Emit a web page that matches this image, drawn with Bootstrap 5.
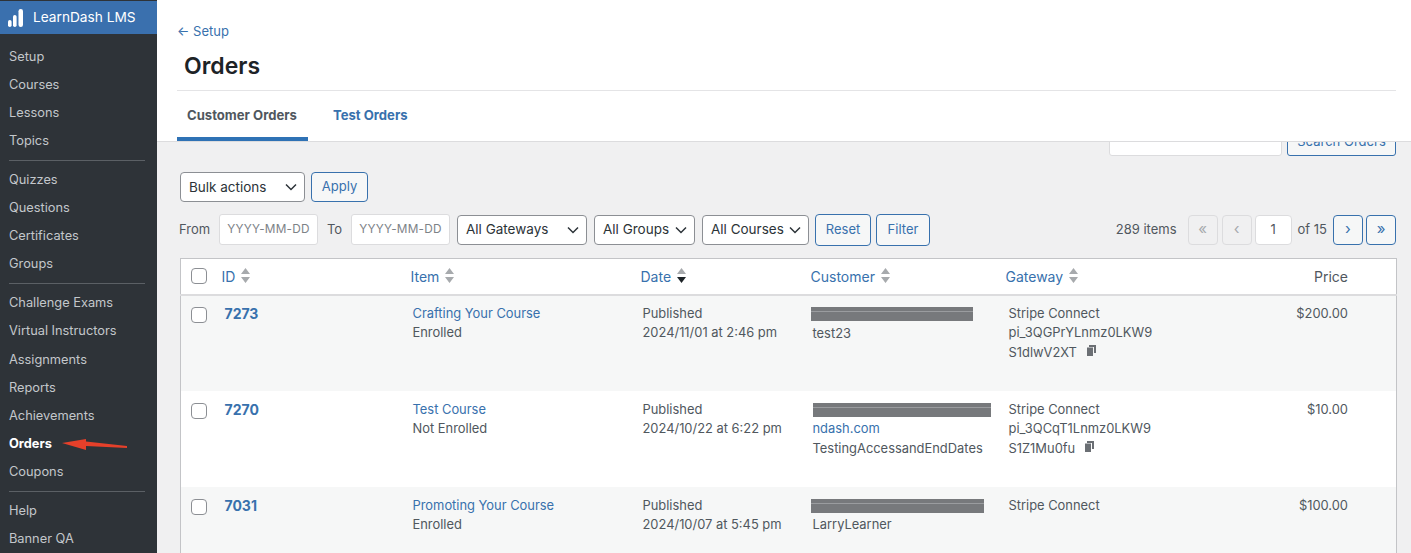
<!DOCTYPE html>
<html lang="en">
<head>
    <meta charset="UTF-8">
    <meta name="viewport" content="width=device-width, initial-scale=1.0">
    <title>Orders</title>
    <link href="https://cdn.jsdelivr.net/npm/bootstrap@5.3.0/dist/css/bootstrap.min.css" rel="stylesheet">
    <style>
        html, body { height: 553px; overflow: hidden; }
        body { font-family: Inter, "Noto Sans", sans-serif; font-size: 13px; color: #50575e; background: #f0f0f1; }
        a { color: #3871ad; text-decoration: none; }

        .ld-shell { height: 553px; }
        .ld-side { width: 157px; flex: none; background: #2e3338; color: #c3c7cb; position: relative; overflow: hidden; }
        .ld-brand { height: 33px; background: #3a70ae; color: #fff; font-size: 13.7px; padding-left: 8px; gap: 10px; margin-top: 1px; }
        .ld-menu { padding-top: 8.6px; }
        .ld-menu a { display: block; height: 28.1px; line-height: 28.1px; padding-left: 9px; color: #c3c7cb; font-size: 12.8px; }
        .ld-menu a.is-on { color: #fff; font-weight: 700; }
        .ld-menu hr { margin: 5px 12px 5px 9px; border: 0; border-top: 1px solid #5b6065; opacity: 1; }
        .ld-arrow { position: absolute; left: 55px; top: 432px; }

        .ld-main { flex: 1; min-width: 0; }
        .ld-head { height: 142px; background: #fff; padding: 0 15px 0 20px; border-bottom: 1px solid #dcdcde; position: relative; z-index: 2; }
        .ld-back { padding-top: 24px; height: 42px; line-height: 15px; font-size: 13px; }
        .ld-title { font-size: 23px; font-weight: 600; color: #1d2327; margin: 0; padding: 7px 0 0 7px; height: 49px; line-height: 34px; border-bottom: 1px solid #e4e4e6; }
        .ld-tabs a { display: block; height: 50px; line-height: 49px; font-weight: 700; font-size: 13.1px; padding: 0 10px; margin-right: 15px; }
        .ld-tabs a.is-on { color: #50575e; border-bottom: 4px solid #2f72b5; width: 131px; }

        .ld-body { padding: 0 15px 0 23px; }
        .ld-search { height: 14px; gap: 5px; overflow: hidden; }
        .ld-search span { display: block; height: 40px; margin-top: -26px; }
        .ld-search .ld-sinput { width: 173px; background: #fff; border: 1px solid #dcdcde; border-radius: 3px; }
        .ld-search .ld-sbtn { width: 109px; background: #f6f7f7; border: 1px solid #3871ad; border-radius: 3px; color: #3871ad; text-align: center; line-height: 48px; overflow: hidden; }

        .ld-select, .ld-btn, .ld-date, .ld-page { height: 30px; border-radius: 4px; font-size: 13px; }
        .ld-select { display: flex; align-items: center; justify-content: space-between; background: #fff; border: 1px solid #8c8f94; color: #2c3338; padding: 0 7px 0 8px; font-size: 13.5px; }
        .ld-btn { display: flex; align-items: center; justify-content: center; background: #f6f7f7; border: 1px solid #3871ad; color: #3871ad; padding: 0; }
        .ld-date { display: flex; align-items: center; justify-content: center; width: 99px; height: 31px; background: #fff; border: 1px solid #dcdcde; border-radius: 3px; color: #7d8287; font-size: 11.8px; letter-spacing: .2px; }
        .ld-page { display: flex; align-items: center; justify-content: center; width: 30px; background: #f6f7f7; border: 1px solid #3871ad; color: #3871ad; font-size: 15px; }
        .ld-page.is-off { background: #f0f0f1; border-color: #dcdcde; color: #a7aaad; }
        .ld-page.is-num { width: 37px; background: #fff; border-color: #dcdcde; color: #50575e; font-size: 13px; }
        .ld-row1 { margin-top: 16px; gap: 6px; }
        .ld-row2 { margin-top: 12px; height: 31px; }
        .ld-row2 .ld-btn { height: 32px; }

        .ld-table { width: 1216px; margin-top: 13px; table-layout: fixed; border-collapse: collapse; border: 1px solid #c3c4c7; background: #fff; }
        .ld-table th { height: 36px; font-weight: 400; font-size: 14px; border-bottom: 2px solid #dcdcde; vertical-align: middle; padding: 0; }
        .ld-table td { height: 96px; vertical-align: top; padding: 8px 0 0; line-height: 19.6px; font-size: 12.9px; color: #50575e; }
        .ld-table tbody tr:not(:first-child) td { padding-top: 9px; }
        .ld-table tbody tr:not(:first-child) td.ld-wide { padding-left: 2px; }
        .ld-table tbody tr:not(:first-child) td.ld-gate { padding-left: 3px; }
        .ld-table tr.is-alt td { background: #f6f7f7; }
        .ld-table td.ld-id { font-size: 14px; font-weight: 700; color: #3871ad; padding-left: 3px; }
        .ld-check { display: block; width: 16px; height: 16px; margin-left: 10px; border: 1px solid #8c8f94; border-radius: 4px; background: #fff; }
        .ld-sort { display: inline-block; vertical-align: -1px; margin-left: 6px; }
        .ld-pad { padding-left: 2px; }
        .ld-table td.ld-wide { padding-left: 2px; }
        .ld-table td.ld-gate { padding-left: 3px; }
        .ld-mask { display: block; height: 14px; margin-top: 3px; margin-bottom: 3.6px; background: linear-gradient(#77797c 4px, #9a9c9f 4px, #9a9c9f 5px, #77797c 5px); }
        .ld-table tbody tr:not(:first-child) .ld-mask { margin-bottom: 2.6px; }
        .ld-copy { margin-left: 9px; vertical-align: 1px; }
    </style>
</head>
<body>
<div class="d-flex ld-shell">
    <div class="ld-side">
        <div class="d-flex align-items-center ld-brand">
            <svg width="15" height="18" viewBox="0 0 15 18"><rect x="0" y="11" width="3.6" height="7" rx="1.8" fill="#fff"/><rect x="5" y="6" width="3.6" height="12" rx="1.8" fill="#fff"/><rect x="10.5" y="0" width="4.5" height="18" rx="2.2" fill="#fff"/></svg>
            <span>LearnDash LMS</span>
        </div>
        <div class="ld-menu">
            <a href="#">Setup</a>
            <a href="#">Courses</a>
            <a href="#">Lessons</a>
            <a href="#">Topics</a>
            <hr>
            <a href="#">Quizzes</a>
            <a href="#">Questions</a>
            <a href="#">Certificates</a>
            <a href="#">Groups</a>
            <hr>
            <a href="#">Challenge Exams</a>
            <a href="#">Virtual Instructors</a>
            <a href="#">Assignments</a>
            <a href="#">Reports</a>
            <a href="#">Achievements</a>
            <a href="#" class="is-on">Orders</a>
            <a href="#">Coupons</a>
            <hr>
            <a href="#">Help</a>
            <a href="#">Banner QA</a>
        </div>
        <svg class="ld-arrow" width="76" height="20" viewBox="0 0 76 20"><path d="M7 11 L31 7 L31 9.5 L72 14 L72 16 L31 14 L31 18 Z" fill="#e5402a"/></svg>
    </div>

    <div class="ld-main">
        <div class="ld-head">
            <div class="ld-back"><a href="#">← Setup</a></div>
            <h1 class="ld-title">Orders</h1>
            <div class="d-flex ld-tabs">
                <a href="#" class="is-on">Customer Orders</a>
                <a href="#">Test Orders</a>
            </div>
        </div>

        <div class="ld-body">
            <div class="d-flex justify-content-end ld-search">
                <span class="ld-sinput"></span>
                <span class="ld-sbtn">Search Orders</span>
            </div>

            <div class="d-flex ld-row1">
                <div class="ld-select" style="width: 125px">Bulk actions <svg width="12" height="8" viewBox="0 0 12 8"><path d="M1 1.5 L6 6.5 L11 1.5" fill="none" stroke="#2c3338" stroke-width="1.5"/></svg></div>
                <div class="ld-btn" style="width: 57px">Apply</div>
            </div>

            <div class="d-flex align-items-center ld-row2">
                <span style="width: 40px; margin-left: -1px">From</span>
                <div class="ld-date">YYYY-MM-DD</div>
                <span style="width: 33px; text-align: center">To</span>
                <div class="ld-date">YYYY-MM-DD</div>
                <div class="ld-select" style="width: 130px; margin-left: 7px">All Gateways <svg width="12" height="8" viewBox="0 0 12 8"><path d="M1 1.5 L6 6.5 L11 1.5" fill="none" stroke="#2c3338" stroke-width="1.5"/></svg></div>
                <div class="ld-select" style="width: 101px; margin-left: 7px">All Groups <svg width="12" height="8" viewBox="0 0 12 8"><path d="M1 1.5 L6 6.5 L11 1.5" fill="none" stroke="#2c3338" stroke-width="1.5"/></svg></div>
                <div class="ld-select" style="width: 107px; margin-left: 7px">All Courses <svg width="12" height="8" viewBox="0 0 12 8"><path d="M1 1.5 L6 6.5 L11 1.5" fill="none" stroke="#2c3338" stroke-width="1.5"/></svg></div>
                <div class="ld-btn" style="width: 56px; margin-left: 6px">Reset</div>
                <div class="ld-btn" style="width: 54px; margin-left: 5px">Filter</div>
                <span class="ms-auto" style="margin-right: 11px">289 items</span>
                <div class="ld-page is-off">«</div>
                <div class="ld-page is-off" style="margin-left: 4px">‹</div>
                <div class="ld-page is-num" style="margin-left: 3px">1</div>
                <span style="margin: 0 6px">of 15</span>
                <div class="ld-page">›</div>
                <div class="ld-page" style="margin-left: 3px">»</div>
            </div>

            <table class="ld-table">
                <colgroup>
                    <col style="width: 41px"><col style="width: 189px"><col style="width: 230px"><col style="width: 170px"><col style="width: 195px"><col style="width: 251px"><col style="width: 140px">
                </colgroup>
                <thead>
                    <tr>
                        <th><span class="ld-check"></span></th>
                        <th><a href="#">ID</a><svg class="ld-sort" width="9" height="15" viewBox="0 0 9 15"><path d="M4.5 0 L9 6 H0 Z M0 9 H9 L4.5 15 Z" fill="#a7aaad"/></svg></th>
                        <th><a href="#">Item</a><svg class="ld-sort" width="9" height="15" viewBox="0 0 9 15"><path d="M4.5 0 L9 6 H0 Z M0 9 H9 L4.5 15 Z" fill="#a7aaad"/></svg></th>
                        <th><a href="#">Date</a><svg class="ld-sort" width="9" height="15" viewBox="0 0 9 15"><path d="M4.5 0 L9 6 H0 Z" fill="#a7aaad"/><path d="M0 9 H9 L4.5 15 Z" fill="#1d2327"/></svg></th>
                        <th><a href="#">Customer</a><svg class="ld-sort" width="9" height="15" viewBox="0 0 9 15"><path d="M4.5 0 L9 6 H0 Z M0 9 H9 L4.5 15 Z" fill="#a7aaad"/></svg></th>
                        <th><a href="#">Gateway</a><svg class="ld-sort" width="9" height="15" viewBox="0 0 9 15"><path d="M4.5 0 L9 6 H0 Z M0 9 H9 L4.5 15 Z" fill="#a7aaad"/></svg></th>
                        <th class="text-end" style="padding-right: 48px; color: #50575e">Price</th>
                    </tr>
                </thead>
                <tbody>
                    <tr class="is-alt">
                        <td><span class="ld-check" style="margin-top: 3px"></span></td>
                        <td class="ld-id">7273</td>
                        <td class="ld-wide"><a href="#">Crafting Your Course</a><br>Enrolled</td>
                        <td class="ld-wide">Published<br>2024/11/01 at 2:46 pm</td>
                        <td><span class="ld-mask" style="width: 162px"></span><span class="ld-pad">test23</span></td>
                        <td class="ld-gate">Stripe Connect<br>pi_3QGPrYLnmz0LKW9<br>S1dlwV2XT<svg class="ld-copy" width="10" height="11" viewBox="0 0 10 11"><path d="M3 0 H10 V8 H8 V2 H3 Z M1 2.5 H7 V11 H1 Z" fill="#6b6f74"/></svg></td>
                        <td class="text-end" style="padding-right: 48px">$200.00</td>
                    </tr>
                    <tr>
                        <td><span class="ld-check" style="margin-top: 3px"></span></td>
                        <td class="ld-id">7270</td>
                        <td class="ld-wide"><a href="#">Test Course</a><br>Not Enrolled</td>
                        <td class="ld-wide">Published<br>2024/10/22 at 6:22 pm</td>
                        <td><span class="ld-mask" style="width: 178px; margin-left: 2px"></span><a href="#" class="ld-pad">ndash.com</a><br><span class="ld-pad">TestingAccessandEndDates</span></td>
                        <td class="ld-gate">Stripe Connect<br>pi_3QCqT1Lnmz0LKW9<br>S1Z1Mu0fu<svg class="ld-copy" width="10" height="11" viewBox="0 0 10 11"><path d="M3 0 H10 V8 H8 V2 H3 Z M1 2.5 H7 V11 H1 Z" fill="#6b6f74"/></svg></td>
                        <td class="text-end" style="padding-right: 48px">$10.00</td>
                    </tr>
                    <tr class="is-alt">
                        <td><span class="ld-check" style="margin-top: 3px"></span></td>
                        <td class="ld-id">7031</td>
                        <td class="ld-wide"><a href="#">Promoting Your Course</a><br>Enrolled</td>
                        <td class="ld-wide">Published<br>2024/10/07 at 5:45 pm</td>
                        <td><span class="ld-mask" style="width: 173px"></span><span class="ld-pad">LarryLearner</span></td>
                        <td class="ld-gate">Stripe Connect</td>
                        <td class="text-end" style="padding-right: 48px">$100.00</td>
                    </tr>
                </tbody>
            </table>
        </div>
    </div>
</div>
<script src="https://cdn.jsdelivr.net/npm/bootstrap@5.3.0/dist/js/bootstrap.bundle.min.js"></script>
</body>
</html>
